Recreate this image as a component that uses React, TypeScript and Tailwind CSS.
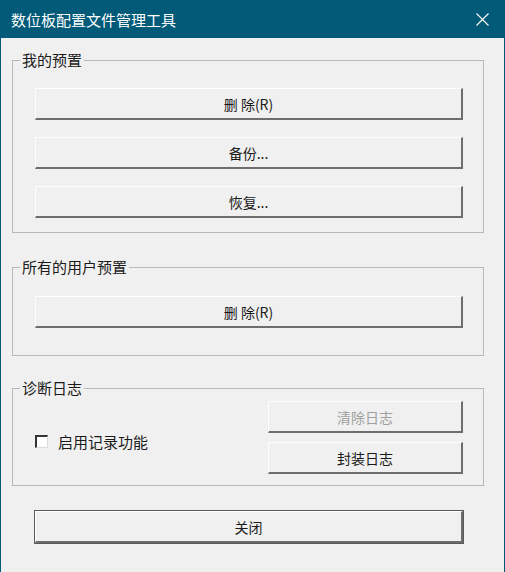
import React from 'react';

const font = { fontFamily: '"Noto Sans CJK SC", "Noto Sans", sans-serif' };

type BtnProps = { label: string; disabled?: boolean; isDefault?: boolean; className?: string };

const WinButton: React.FC<BtnProps> = ({ label, disabled, isDefault, className = '' }) => (
  <button
    className={
      'h-[32px] bg-[#f0f0f0] text-[14px] leading-none flex items-center justify-center ' +
      'border-t border-l border-t-[#fdfdfd] border-l-[#fdfdfd] border-r-2 border-b-2 border-r-[#6d6d6d] border-b-[#6d6d6d] ' +
      (isDefault ? 'outline outline-1 outline-[#5a5a5a] ' : '') +
      (disabled ? 'text-[#a0a0a0] ' : 'text-[#1a1a1a] ') +
      className
    }
    disabled={disabled}
  >
    {label}
  </button>
);

const GroupBox: React.FC<{ title: string; className?: string; children: React.ReactNode }> = ({
  title,
  className = '',
  children,
}) => (
  <fieldset className={'w-[472px] border border-[#b8b8b8] ' + className}>
    <legend className="-ml-[15px] px-[2px] text-[15px] leading-[20px] text-[#1a1a1a]">{title}</legend>
    {children}
  </fieldset>
);

export default function App() {
  return (
    <div style={font} className="w-[505px] h-[572px] flex flex-col bg-[#f0f0f0] overflow-hidden">
      {/* title bar */}
      <div className="h-[38px] shrink-0 bg-[#005a78] flex items-center justify-between pl-[11px] pr-[14px]">
        <span className="text-white text-[15px] leading-none">数位板配置文件管理工具</span>
        <svg width="13" height="13" viewBox="0 0 13 13" className="mr-[2px]">
          <path d="M0.5 0.5 L12.5 12.5 M12.5 0.5 L0.5 12.5" stroke="#ffffff" strokeWidth="1.1" />
        </svg>
      </div>

      {/* body */}
      <div className="flex-1 flex flex-col border-x border-[#005a78] pl-[11px]">
        <GroupBox title="我的预置" className="mt-[12px] pt-[18px] pb-[14px] pl-[22px] pr-[20px]">
          <div className="flex flex-col gap-[17px]">
            <WinButton label="删 除(R)" className="w-[428px]" />
            <WinButton label="备份..." className="w-[428px]" />
            <WinButton label="恢复..." className="w-[428px]" />
          </div>
        </GroupBox>

        <GroupBox title="所有的用户预置" className="mt-[24px] pt-[19px] pb-[27px] pl-[22px] pr-[20px]">
          <WinButton label="删 除(R)" className="w-[428px]" />
        </GroupBox>

        <GroupBox title="诊断日志" className="mt-[22px] pt-[3px] pb-[11px] pl-[22px] pr-[20px]">
          <div className="flex items-center justify-between">
            <label className="flex items-center gap-[10px] mt-[8px]">
              <span className="w-[13px] h-[13px] bg-white border border-[#333333] border-r-[#dcdcdc] border-b-[#dcdcdc] border-l-2 border-t-2" />
              <span className="text-[15px] leading-none text-[#1a1a1a]">启用记录功能</span>
            </label>
            <div className="flex flex-col gap-[9px]">
              <WinButton label="清除日志" disabled className="w-[195px]" />
              <WinButton label="封装日志" className="w-[195px]" />
            </div>
          </div>
        </GroupBox>

        <div className="mt-[25px] pl-[23px]">
          <WinButton label="关闭" isDefault className="w-[428px]" />
        </div>
      </div>
    </div>
  );
}
